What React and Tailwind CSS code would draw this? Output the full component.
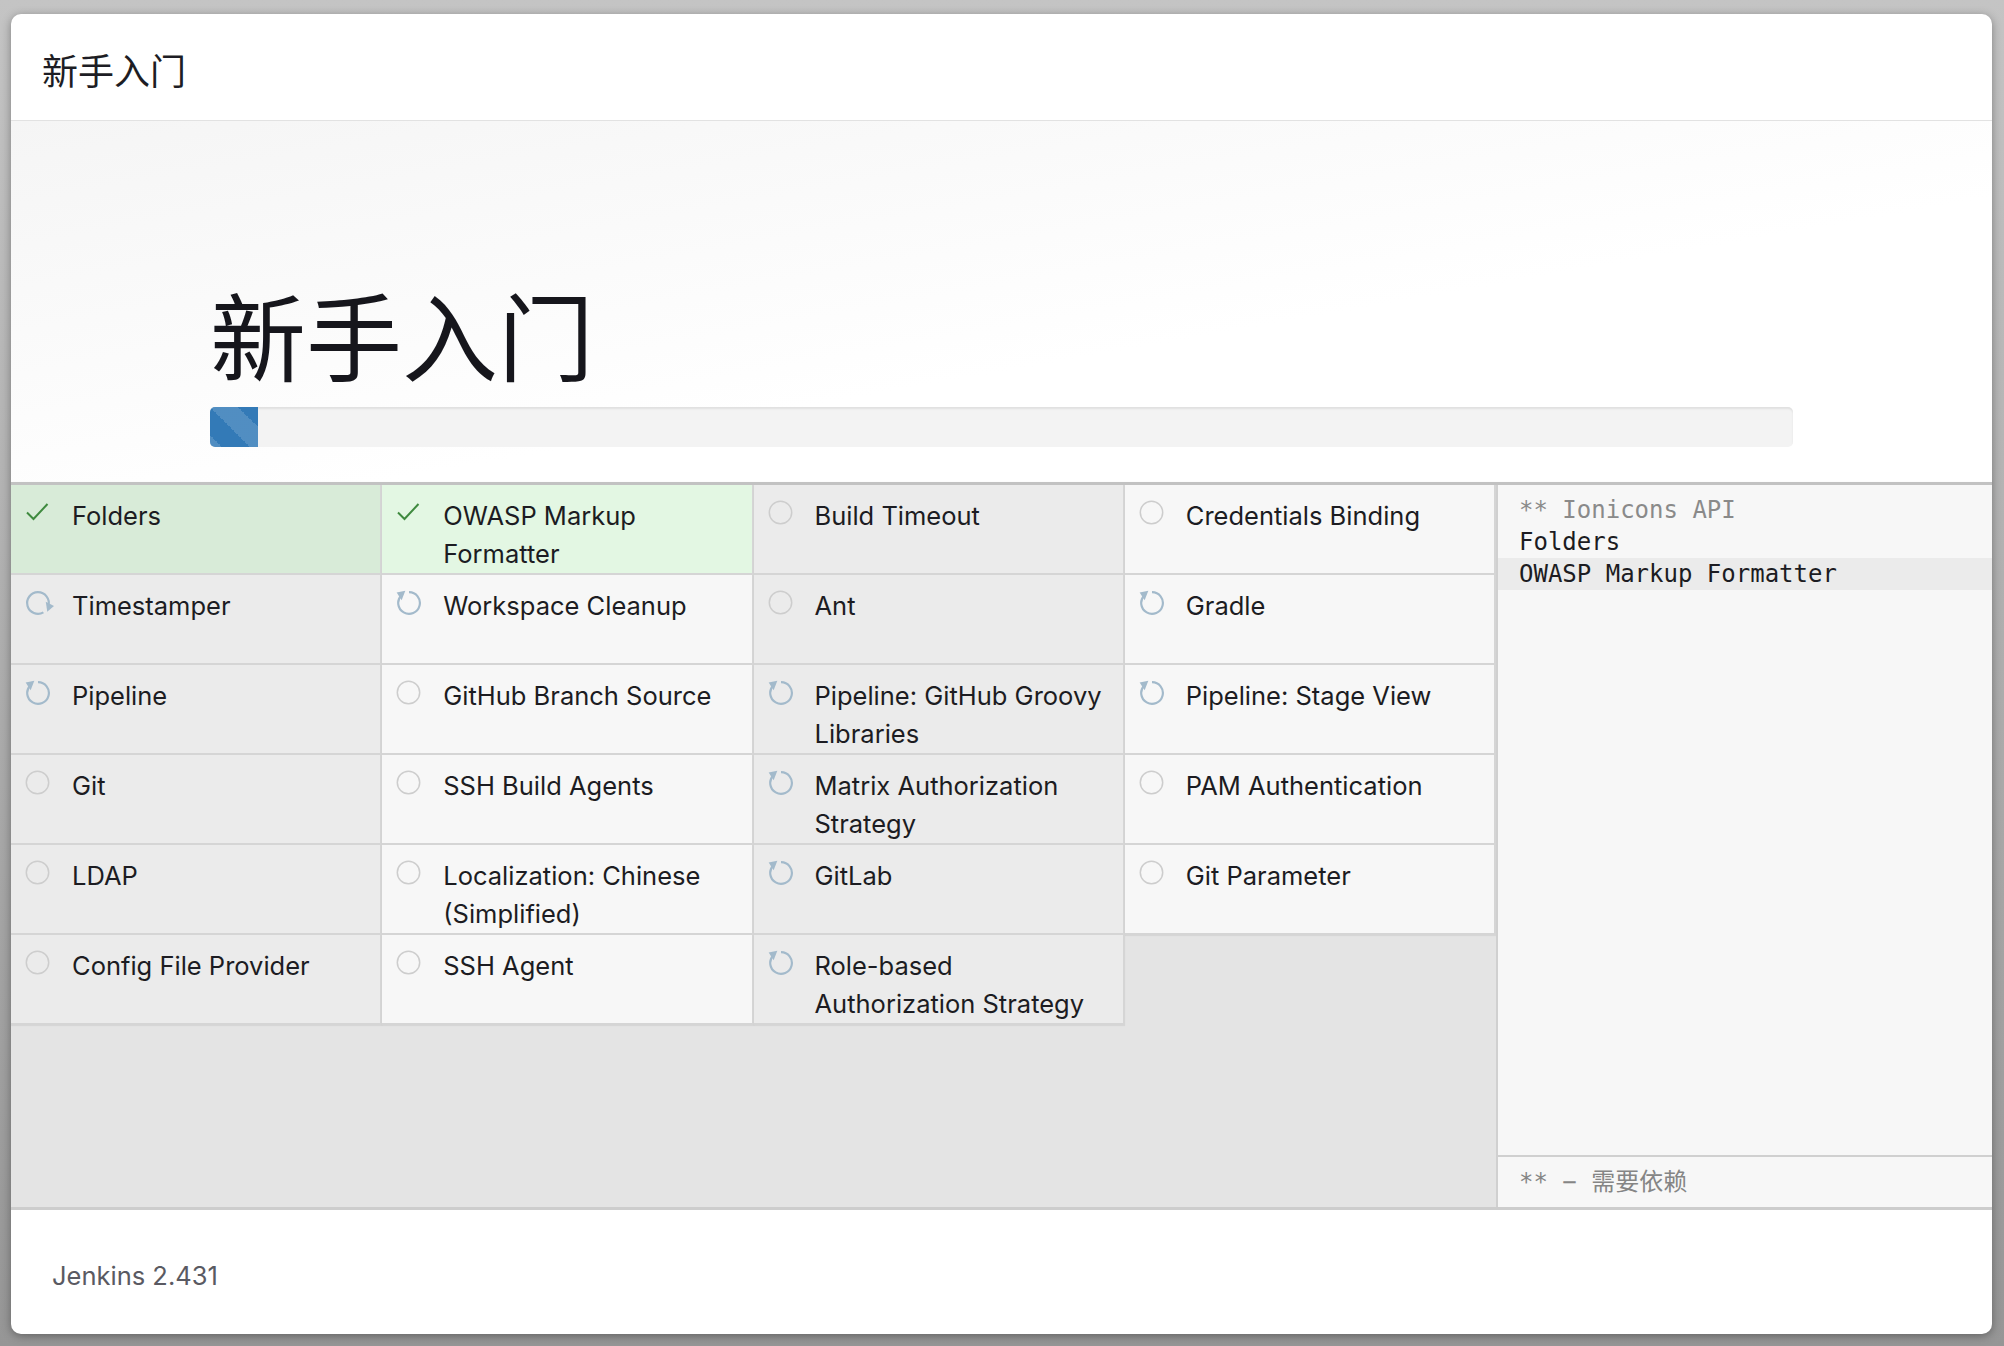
import React from 'react';

const plugins = [
  { name: 'Folders', state: 'done' },
  { name: 'OWASP Markup Formatter', state: 'done' },
  { name: 'Build Timeout', state: 'pending' },
  { name: 'Credentials Binding', state: 'pending' },
  { name: 'Timestamper', state: 'installing' },
  { name: 'Workspace Cleanup', state: 'queued' },
  { name: 'Ant', state: 'pending' },
  { name: 'Gradle', state: 'queued' },
  { name: 'Pipeline', state: 'queued' },
  { name: 'GitHub Branch Source', state: 'pending' },
  { name: 'Pipeline: GitHub Groovy Libraries', state: 'queued' },
  { name: 'Pipeline: Stage View', state: 'queued' },
  { name: 'Git', state: 'pending' },
  { name: 'SSH Build Agents', state: 'pending' },
  { name: 'Matrix Authorization Strategy', state: 'queued' },
  { name: 'PAM Authentication', state: 'pending' },
  { name: 'LDAP', state: 'pending' },
  { name: 'Localization: Chinese (Simplified)', state: 'pending' },
  { name: 'GitLab', state: 'queued' },
  { name: 'Git Parameter', state: 'pending' },
  { name: 'Config File Provider', state: 'pending' },
  { name: 'SSH Agent', state: 'pending' },
  { name: 'Role-based Authorization Strategy', state: 'queued' },
];

function CheckIcon() {
  return (
    <svg width="24" height="24" viewBox="0 0 24 24" fill="none">
      <path d="M2 12.5 L8.5 19 L22.5 4" stroke="#3f8a3f" strokeWidth="2" />
    </svg>
  );
}

function CircleIcon() {
  return (
    <svg width="25" height="25" viewBox="0 0 25 25" fill="none">
      <circle cx="12.5" cy="12.5" r="11.2" stroke="#cdcdcd" strokeWidth="1.5" />
    </svg>
  );
}

// circular arrow, rotated while the plugin is being installed
function RefreshIcon({ spinning }) {
  return (
    <svg
      width="26"
      height="26"
      viewBox="0 0 24 24"
      fill="none"
      className={spinning ? 'rotate-[150deg]' : ''}
    >
      <path d="M12 2 A10 10 0 1 1 4.9 5.0" stroke="#a3bacb" strokeWidth="2" />
      <polygon points="0.6,2.2 8.6,0.8 5.2,9.4" fill="#a3bacb" />
    </svg>
  );
}

function PluginCell({ plugin, index }) {
  const col = index % 4;
  let bg = col % 2 === 0 ? 'bg-[#ebebeb]' : 'bg-[#f7f7f7]';
  if (plugin.state === 'done') {
    bg = col % 2 === 0 ? 'bg-[#d8ebd8]' : 'bg-[#e3f7e3]';
  }

  return (
    <div
      className={`${bg} h-[90px] flex items-start border-r-2 border-b-2 border-[#d5d5d5] shadow-[0_1px_1px_rgba(0,0,0,0.06)]`}
    >
      <div className="w-[24px] ml-[14px] mt-[15px] flex-shrink-0">
        {plugin.state === 'done' && <CheckIcon />}
        {plugin.state === 'pending' && <CircleIcon />}
        {plugin.state === 'queued' && <RefreshIcon />}
        {plugin.state === 'installing' && <RefreshIcon spinning />}
      </div>
      <div className="ml-[23px] mr-[10px] pt-[12px] text-[25.5px] leading-[38.4px] text-[#1c1c22]">
        {plugin.name}
      </div>
    </div>
  );
}

export default function App() {
  return (
    <div className="w-[2004px] h-[1346px] bg-gradient-to-b from-[#c4c4c4] to-[#969696] pt-[14px] pl-[11px] font-['Inter','Noto_Sans_CJK_SC',sans-serif]">
      <div className="w-[1981px] h-[1320px] bg-white rounded-[10px] overflow-hidden flex flex-col shadow-[0_2px_10px_rgba(0,0,0,0.35)]">
        {/* dialog header */}
        <div className="h-[107px] flex-shrink-0 flex items-center pl-[31px] pt-[4px] border-b border-[#e2e2e2]">
          <h1 className="text-[36px] text-[#1d1d24] font-['Noto_Sans_CJK_SC',sans-serif]">新手入门</h1>
        </div>

        {/* hero with progress */}
        <div className="h-[361px] flex-shrink-0 px-[199px] pt-[164px] bg-[linear-gradient(170deg,#f5f5f5_0%,#fafafa_30%,#ffffff_60%)]">
          <div className="text-[96px] leading-none h-[96px] mb-[26px] text-[#16161c] font-['Noto_Sans_CJK_SC',sans-serif]">
            新手入门
          </div>
          <div className="h-[40px] rounded-[5px] bg-[#f3f3f3] shadow-[inset_0_2px_2px_rgba(0,0,0,0.08)] overflow-hidden">
            <div className="h-full w-[48px] bg-[#337ab7] bg-[linear-gradient(45deg,rgba(255,255,255,.15)_25%,transparent_25%,transparent_50%,rgba(255,255,255,.15)_50%,rgba(255,255,255,.15)_75%,transparent_75%,transparent)] bg-[length:56px_56px]" />
          </div>
        </div>
        <div className="h-[3px] flex-shrink-0 bg-[#c2c2c2] shadow-[0_1px_2px_rgba(0,0,0,0.15)]" />

        {/* plugin grid + log */}
        <div className="h-[722px] flex-shrink-0 flex bg-[#e4e4e4]">
          <div className="w-[1485px] grid grid-cols-4 content-start">
            {plugins.map((p, i) => (
              <PluginCell key={p.name} plugin={p} index={i} />
            ))}
          </div>
          <div className="flex-1 flex flex-col bg-[#f7f7f7] border-l-2 border-[#d0d0d0] font-['DejaVu_Sans_Mono','Noto_Sans_CJK_SC',monospace] text-[24px]">
            <div className="flex-1 pt-[9px]">
              <div className="h-[32px] leading-[32px] pl-[21px] text-[#8a8a8a]">** Ionicons API</div>
              <div className="h-[32px] leading-[32px] pl-[21px] text-[#1c1c22]">Folders</div>
              <div className="h-[32px] leading-[32px] pl-[21px] text-[#1c1c22] bg-[#ebebeb]">OWASP Markup Formatter</div>
            </div>
            <div className="h-[52px] flex items-center pl-[21px] border-t-2 border-[#d0d0d0] text-[#858585]">
              ** − 需要依赖
            </div>
          </div>
        </div>
        <div className="h-[3px] flex-shrink-0 bg-[#cdcdcd]" />

        {/* footer */}
        <div className="flex-1 flex items-center pl-[41px] pt-[8px]">
          <span className="text-[25.5px] text-[#5a5a62]">Jenkins 2.431</span>
        </div>
      </div>
    </div>
  );
}
